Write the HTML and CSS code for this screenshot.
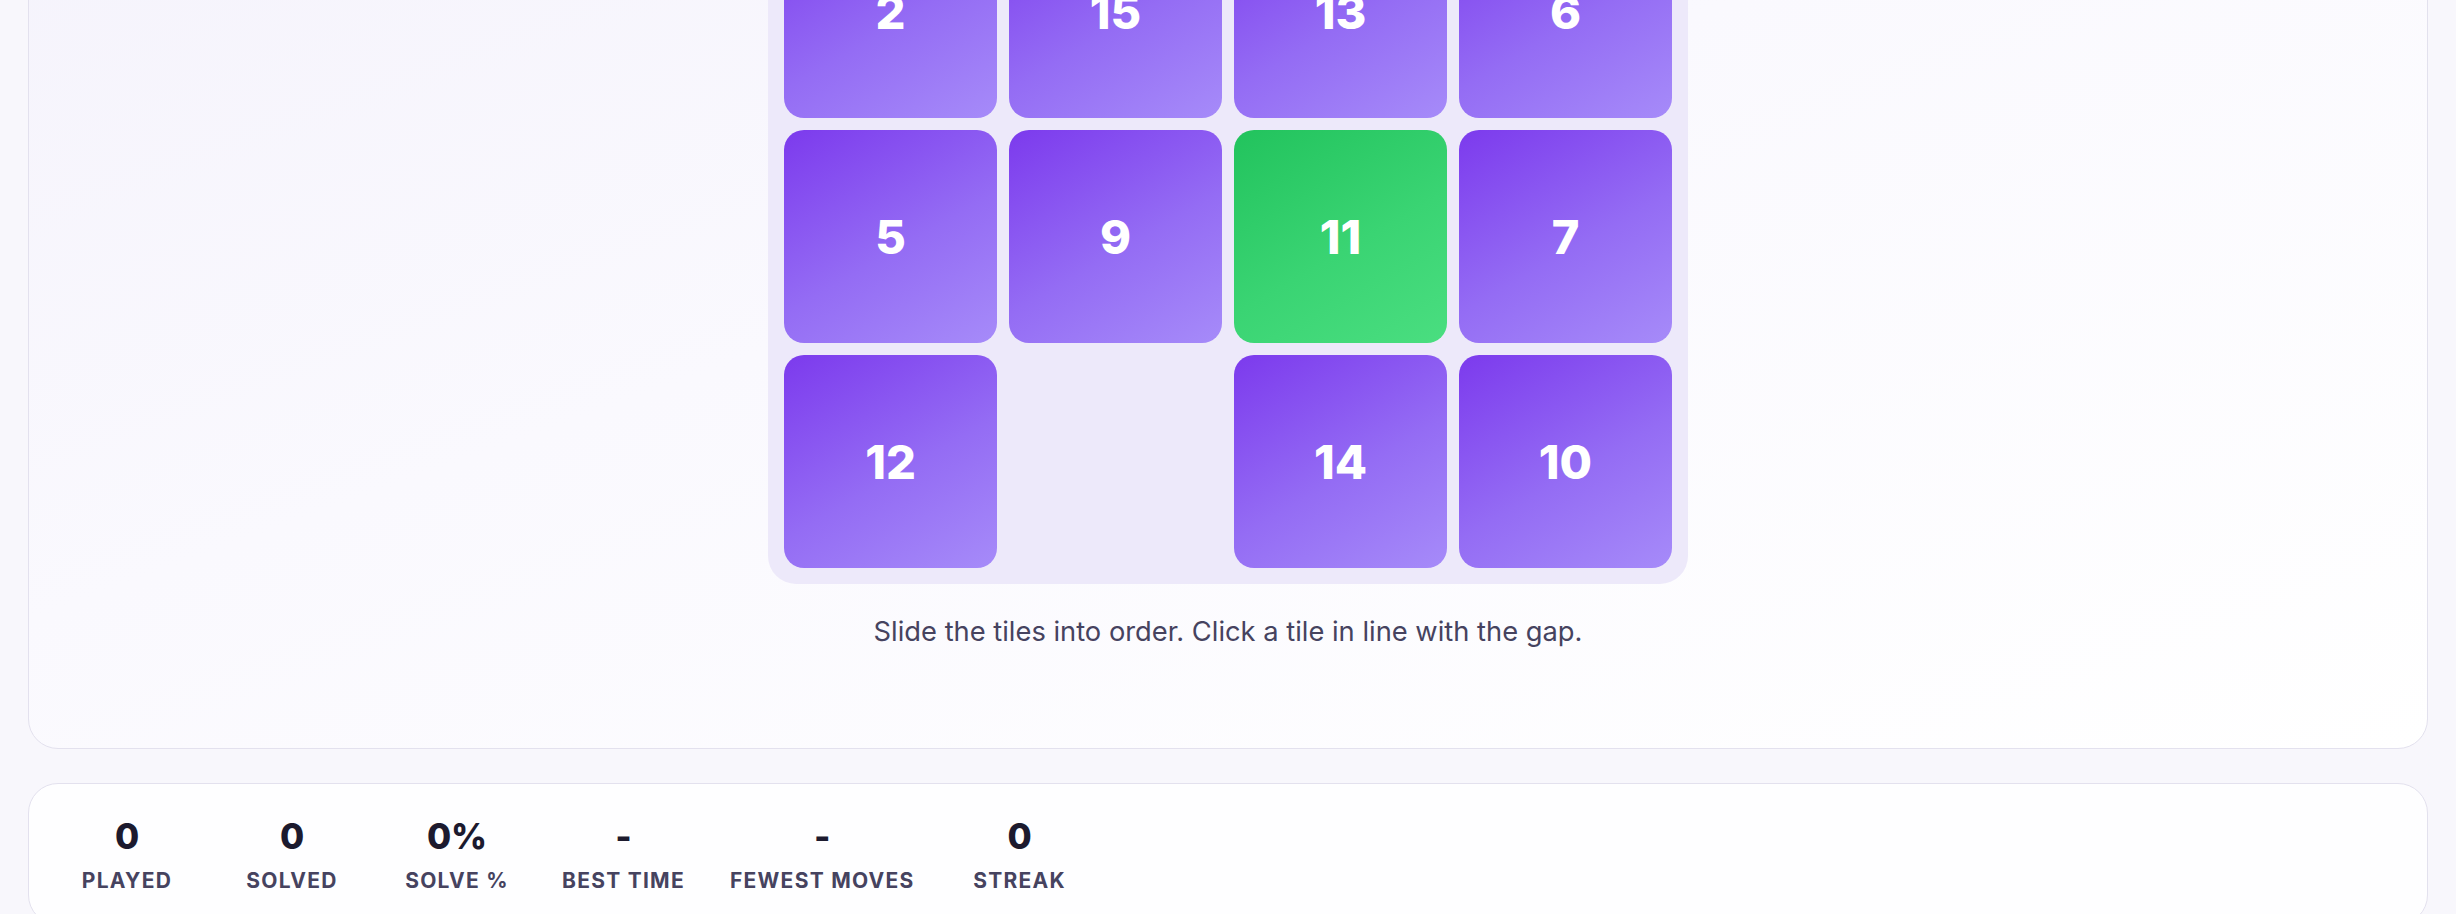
FILE: index.html
```html
<html>
  <head>
    <title>Slide Puzzle</title>
    <link rel="stylesheet" href="styles.css">
  </head>
  <body>
    <div class="page">
      <div class="game-card">
        <div id="board" class="board"></div>
        <div class="hint">Slide the tiles into order. Click a tile in line with the gap.</div>
      </div>

      <div class="stats-card">
        <div class="stat"><div class="stat-value">0</div><div class="stat-label">Played</div></div>
        <div class="stat"><div class="stat-value">0</div><div class="stat-label">Solved</div></div>
        <div class="stat"><div class="stat-value">0%</div><div class="stat-label">Solve %</div></div>
        <div class="stat"><div class="stat-value">-</div><div class="stat-label">Best Time</div></div>
        <div class="stat"><div class="stat-value">-</div><div class="stat-label">Fewest Moves</div></div>
        <div class="stat"><div class="stat-value">0</div><div class="stat-label">Streak</div></div>
      </div>
    </div>

    <script>
    // 0 is the gap
    let tiles = [3, 4, 1, 8, 2, 15, 13, 6, 5, 9, 11, 7, 12, 0, 14, 10];

    function drawBoard() {
      let board = document.getElementById("board");
      let html = "";
      tiles.forEach((n, i) => {
        if (n === 0) {
          html += `<div class="cell empty"></div>`;
        } else {
          let done = n === i + 1 ? " correct" : "";
          html += `<div class="cell tile${done}">${n}</div>`;
        }
      });
      board.innerHTML = html;
    }

    drawBoard();
    </script>
  </body>
</html>
```

FILE: styles.css
```css
* {
  box-sizing: border-box;
}
html {
  background-color: #f8f7fc;
}
body {
  margin: 0;
  font-family: Inter, "Noto Sans", sans-serif;
  color: #1c1a2e;
}
/* page is shown scrolled down, the top of the game card is out of view */
.page {
  margin-top: -380px;
  padding: 0 28px 40px;
}
.game-card {
  background: linear-gradient(160deg, #f3f1fb 0%, #faf9fe 50%, #ffffff 100%);
  border: 1px solid #e3e1ee;
  border-radius: 30px;
  padding: 43px 36px 96px;
  display: flex;
  flex-direction: column;
  align-items: center;
}
.board {
  display: grid;
  grid-template-columns: repeat(4, 213px);
  grid-auto-rows: 213px;
  gap: 12px;
  padding: 16px;
  background-color: #ede9fa;
  border-radius: 28px;
}
.cell {
  border-radius: 20px;
}
.tile {
  display: flex;
  align-items: center;
  justify-content: center;
  background: linear-gradient(150deg, #7c3aed 0%, #946cf4 55%, #a68bf9 100%);
  color: #ffffff;
  font-size: 47px;
  font-weight: 800;
}
.tile.correct {
  background: linear-gradient(150deg, #22c35d 0%, #3ad473 55%, #4ade80 100%);
}
.hint {
  margin-top: 28px;
  font-size: 27.3px;
  line-height: 40px;
  color: #46435f;
}
.stats-card {
  margin-top: 34px;
  background-color: #fefeff;
  border: 1px solid #e3e1ee;
  border-radius: 30px;
  padding: 31px 38px;
  display: flex;
  gap: 45px;
}
.stat {
  min-width: 120px;
  text-align: center;
}
.stat-value {
  font-size: 35px;
  line-height: 42px;
  font-weight: 800;
  color: #1c1a2e;
}
.stat-label {
  margin-top: 11px;
  font-size: 21px;
  line-height: 25px;
  font-weight: 700;
  letter-spacing: 0.06em;
  text-transform: uppercase;
  color: #46435f;
}
```
